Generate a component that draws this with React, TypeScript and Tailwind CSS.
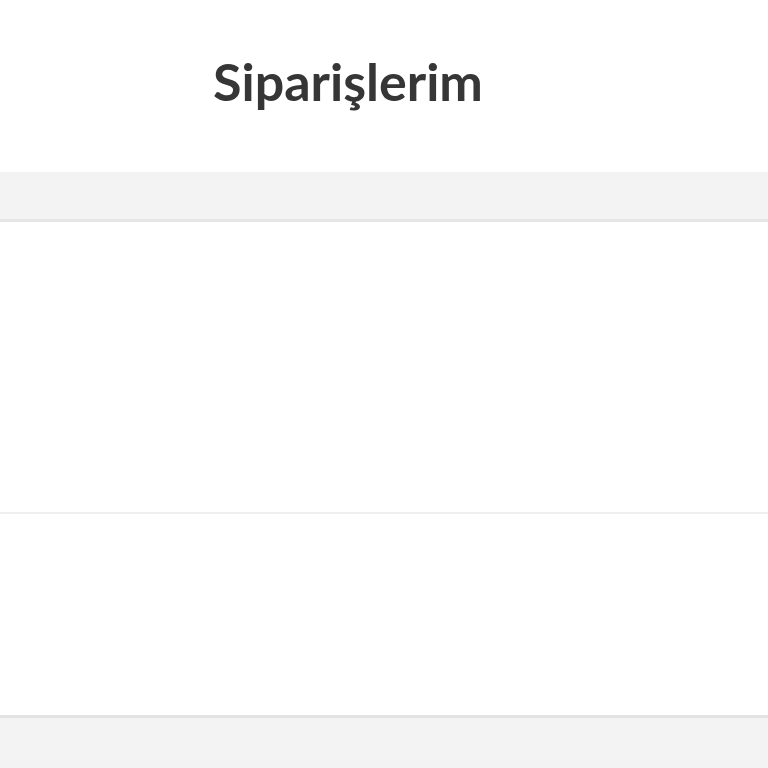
import React from 'react';

export default function App() {
  return (
    <div className="min-h-[768px] bg-white font-['Lato',sans-serif] text-[#333]">
      {/* Header */}
      <header className="flex h-[172px] items-start justify-center pr-[72px] pt-[47px]">
        <h1 className="text-[52px] font-bold leading-[68px] text-[#363636]">Siparişlerim</h1>
      </header>

      {/* Filter bar */}
      <div className="h-[50px] border-b-[3px] border-[#e6e6e6] bg-[#f3f3f3]" />

      {/* Orders */}
      <div className="h-[292px] border-b-2 border-[#efefef]" />
      <div className="h-[204px] border-b-[3px] border-[#e3e3e3]" />

      <div className="h-[60px] bg-[#f3f3f3]" />
    </div>
  );
}
